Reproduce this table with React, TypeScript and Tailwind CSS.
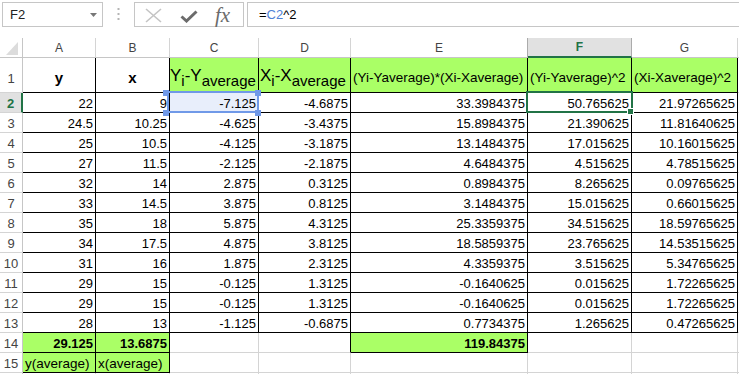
import React from "react";

type Row = (string | number)[];

const data: Row[] = [
  ["22", "9", "-7.125", "-4.6875", "33.3984375", "50.765625", "21.97265625"],
  ["24.5", "10.25", "-4.625", "-3.4375", "15.8984375", "21.390625", "11.81640625"],
  ["25", "10.5", "-4.125", "-3.1875", "13.1484375", "17.015625", "10.16015625"],
  ["27", "11.5", "-2.125", "-2.1875", "4.6484375", "4.515625", "4.78515625"],
  ["32", "14", "2.875", "0.3125", "0.8984375", "8.265625", "0.09765625"],
  ["33", "14.5", "3.875", "0.8125", "3.1484375", "15.015625", "0.66015625"],
  ["35", "18", "5.875", "4.3125", "25.3359375", "34.515625", "18.59765625"],
  ["34", "17.5", "4.875", "3.8125", "18.5859375", "23.765625", "14.53515625"],
  ["31", "16", "1.875", "2.3125", "4.3359375", "3.515625", "5.34765625"],
  ["29", "15", "-0.125", "1.3125", "-0.1640625", "0.015625", "1.72265625"],
  ["29", "15", "-0.125", "1.3125", "-0.1640625", "0.015625", "1.72265625"],
  ["28", "13", "-1.125", "-0.6875", "0.7734375", "1.265625", "0.47265625"],
];

function inB(r: number, c: number): boolean {
  if (c < 0 || c > 6) return false;
  if (r >= 1 && r <= 13) return true;
  if (r === 14) return c === 0 || c === 1 || c === 4;
  if (r === 15) return c === 0 || c === 1;
  return false;
}

function isGreen(r: number, c: number): boolean {
  if (r === 1) return c >= 2;
  if (r === 14) return c === 0 || c === 1 || c === 4;
  if (r === 15) return c === 0 || c === 1;
  return false;
}

function borderCls(r: number, c: number): string {
  const right = inB(r, c) || inB(r, c + 1) ? "border-r-black" : "border-r-[#d4d4d4]";
  const bottom = inB(r, c) || inB(r + 1, c) ? "border-b-black" : "border-b-[#d4d4d4]";
  return `border-r border-b ${right} ${bottom}`;
}

function RowHeader({ n, h, pb, hideText }: { n: number; h: string; pb: string; hideText?: boolean }) {
  const active = n === 2;
  return (
    <div
      className={`flex items-end justify-center border-b border-b-[#d4d4d4] ${h} ${pb} ${
        active
          ? "border-r-2 border-r-[#217346] bg-[#e1e1e1] font-bold text-[#217346]"
          : "border-r border-r-[#c6c6c6] bg-white text-[#444]"
      } text-[13px] leading-[16px]`}
    >
      {hideText ? null : n}
    </div>
  );
}

function Sub({ children }: { children: React.ReactNode }) {
  return <span className="relative top-[5px] text-[15px]">{children}</span>;
}

export default function App() {
  const letters = ["A", "B", "C", "D", "E", "F", "G"];
  const headerTexts = ["(Yi-Yaverage)*(Xi-Xaverage)", "(Yi-Yaverage)^2", "(Xi-Xaverage)^2"];

  const cells: React.ReactNode[] = [];

  // Column header row
  cells.push(
    <div key="corner" className="relative h-[20px] border-r border-b border-r-[#c6c6c6] border-b-[#c6c6c6] bg-white">
      <svg className="absolute left-[6px] top-[4px]" width="13" height="14" viewBox="0 0 13 14">
        <polygon points="0,13 12,0 12,13" fill="#dcdcdc" />
      </svg>
    </div>
  );
  letters.forEach((l) => {
    const sel = l === "F";
    const rightDark = l === "E" || l === "F";
    cells.push(
      <div
        key={`h-${l}`}
        className={`flex h-[20px] items-center justify-center text-[12px] leading-[14px] ${
          sel
            ? "border-b-2 border-b-[#217346] bg-[#e1e1e1] font-bold text-[#217346]"
            : "border-b border-b-[#c6c6c6] bg-white text-[#444]"
        } border-r ${rightDark ? "border-r-[#ababab]" : "border-r-[#d4d4d4]"}`}
      >
        {l}
      </div>
    );
  });
  cells.push(<div key="h-end" className="h-[20px] border-b border-b-[#c6c6c6] bg-white" />);

  // Row 1
  cells.push(<RowHeader key="rh1" n={1} h="h-[35px]" pb="pb-[5px]" />);
  cells.push(
    <div key="a1" className={`flex h-[35px] items-end justify-center bg-white pb-[6px] text-[15px] font-bold leading-[16px] ${borderCls(1, 0)}`}>
      y
    </div>
  );
  cells.push(
    <div key="b1" className={`flex h-[35px] items-end justify-center bg-white pb-[6px] text-[15px] font-bold leading-[16px] ${borderCls(1, 1)}`}>
      x
    </div>
  );
  cells.push(
    <div key="c1" className={`flex h-[35px] items-end whitespace-nowrap bg-[#aaff66] pb-[7px] text-[17px] leading-[18px] ${borderCls(1, 2)}`}>
      <span>
        Y<Sub>i</Sub>-Y<Sub>average</Sub>
      </span>
    </div>
  );
  cells.push(
    <div key="d1" className={`flex h-[35px] items-end whitespace-nowrap bg-[#aaff66] pb-[7px] pl-[1px] text-[17px] leading-[18px] ${borderCls(1, 3)}`}>
      <span>
        X<Sub>i</Sub>-X<Sub>average</Sub>
      </span>
    </div>
  );
  headerTexts.forEach((t, i) => {
    cells.push(
      <div
        key={`t1-${i}`}
        className={`flex h-[35px] items-end overflow-hidden whitespace-nowrap bg-[#aaff66] pb-[6px] pl-[2px] text-[13.5px] leading-[16px] ${borderCls(1, 4 + i)}`}
      >
        {t}
      </div>
    );
  });
  cells.push(<div key="e1" className="h-[35px] border-b border-b-[#d4d4d4] bg-white" />);

  // Data rows 2-13
  data.forEach((row, ri) => {
    const r = ri + 2;
    cells.push(<RowHeader key={`rh${r}`} n={r} h="h-[20px]" pb="pb-0" />);
    row.forEach((v, c) => {
      const bg = r === 2 && c === 2 ? "bg-[#e8eefb]" : "bg-white";
      cells.push(
        <div
          key={`d${r}-${c}`}
          className={`flex h-[20px] items-end justify-end overflow-hidden whitespace-nowrap pr-[2px] text-[13px] leading-[16px] ${bg} ${borderCls(r, c)}`}
        >
          {v}
        </div>
      );
    });
    cells.push(<div key={`de${r}`} className="h-[20px] border-b border-b-[#d4d4d4] bg-white" />);
  });

  // Row 14
  const row14: (string | null)[] = ["29.125", "13.6875", null, null, "119.84375", null, null];
  cells.push(<RowHeader key="rh14" n={14} h="h-[20px]" pb="pb-0" />);
  row14.forEach((v, c) => {
    cells.push(
      <div
        key={`r14-${c}`}
        className={`flex h-[20px] items-end justify-end whitespace-nowrap pr-[2px] text-[13px] font-bold leading-[16px] ${
          isGreen(14, c) ? "bg-[#aaff66]" : "bg-white"
        } ${borderCls(14, c)}`}
      >
        {v}
      </div>
    );
  });
  cells.push(<div key="r14e" className="h-[20px] border-b border-b-[#d4d4d4] bg-white" />);

  // Row 15
  const row15: (string | null)[] = ["y(average)", "x(average)", null, null, null, null, null];
  cells.push(<RowHeader key="rh15" n={15} h="h-[20px]" pb="pb-0" />);
  row15.forEach((v, c) => {
    cells.push(
      <div
        key={`r15-${c}`}
        className={`flex h-[20px] items-end justify-start whitespace-nowrap pl-[2px] text-[13.5px] leading-[16px] ${
          isGreen(15, c) ? "bg-[#aaff66]" : "bg-white"
        } ${borderCls(15, c)}`}
      >
        {v}
      </div>
    );
  });
  cells.push(<div key="r15e" className="h-[20px] border-b border-b-[#d4d4d4] bg-white" />);

  // Row 16 (only a sliver visible)
  cells.push(<RowHeader key="rh16" n={16} h="h-[20px]" pb="pb-0" hideText />);
  for (let c = 0; c < 7; c++) {
    cells.push(<div key={`r16-${c}`} className={`h-[20px] bg-white ${borderCls(16, c)}`} />);
  }
  cells.push(<div key="r16e" className="h-[20px] border-b border-b-[#d4d4d4] bg-white" />);

  return (
    <div className="h-[374px] w-[739px] overflow-hidden bg-white font-['Liberation_Sans',Arial,sans-serif] text-black">
      {/* Formula bar */}
      <div className="flex h-[38px] items-start pt-[2px]">
        <div className="ml-[2px] flex h-[25px] w-[101px] items-center border border-[#c6c6c6] pl-[7px] pr-[5px] text-[13px] text-[#222]">
          <span>F2</span>
          <svg className="ml-auto" width="7" height="4" viewBox="0 0 7 4">
            <polygon points="0,0 7,0 3.5,4" fill="#777" />
          </svg>
        </div>
        <div className="flex h-[25px] w-[31px] items-center justify-center">
          <svg width="3" height="13" viewBox="0 0 3 13">
            <rect x="0.5" y="0" width="2" height="2" fill="#b5b5b5" />
            <rect x="0.5" y="5" width="2" height="2" fill="#b5b5b5" />
            <rect x="0.5" y="10" width="2" height="2" fill="#b5b5b5" />
          </svg>
        </div>
        <div className="relative flex h-[25px] w-[110px] items-center border border-[#c6c6c6]">
          <svg className="absolute left-[10px] top-[5px]" width="17" height="15" viewBox="0 0 17 15">
            <line x1="1" y1="1" x2="16" y2="14" stroke="#c4c4c4" strokeWidth="1.6" />
            <line x1="16" y1="1" x2="1" y2="14" stroke="#c4c4c4" strokeWidth="1.6" />
          </svg>
          <svg className="absolute left-[45px] top-[7px]" width="18" height="13" viewBox="0 0 18 13">
            <path d="M1.5 6.5 L6.5 11 L16.5 1.5" fill="none" stroke="#6b6b6b" strokeWidth="3" strokeLinejoin="miter" />
          </svg>
          <span className="absolute left-[80px] top-[1px] font-['Liberation_Serif',serif] text-[21px] italic leading-[22px] text-[#6b6b6b]">
            fx
          </span>
        </div>
        <div className="ml-[3px] flex h-[25px] flex-1 items-center border border-r-0 border-[#c6c6c6] pl-[11px] text-[13px]">
          <span>=</span>
          <span className="text-[#4f81d6]">C2</span>
          <span>^2</span>
        </div>
      </div>

      {/* Sheet grid */}
      <div className="relative">
        <div className="grid grid-cols-[23px_73px_74px_89px_92px_177px_104px_106px_1fr]">{cells}</div>

        {/* C2 reference highlight */}
        <div className="pointer-events-none absolute left-[167px] top-[53px] h-[22px] w-[92px] border-2 border-[#7099e8]" />
        <div className="absolute left-[163px] top-[52px] h-[6px] w-[6px] bg-[#7099e8]" />
        <div className="absolute left-[255px] top-[52px] h-[6px] w-[6px] bg-[#7099e8]" />
        <div className="absolute left-[163px] top-[72px] h-[6px] w-[6px] bg-[#7099e8]" />
        <div className="absolute left-[255px] top-[72px] h-[6px] w-[6px] bg-[#7099e8]" />

        {/* F2 active cell */}
        <div className="pointer-events-none absolute left-[526px] top-[53px] h-[22px] w-[107px] border-2 border-[#217346]" />
        <div className="absolute left-[627px] top-[70px] h-[7px] w-[7px] border border-white bg-[#217346]" />
      </div>
    </div>
  );
}
